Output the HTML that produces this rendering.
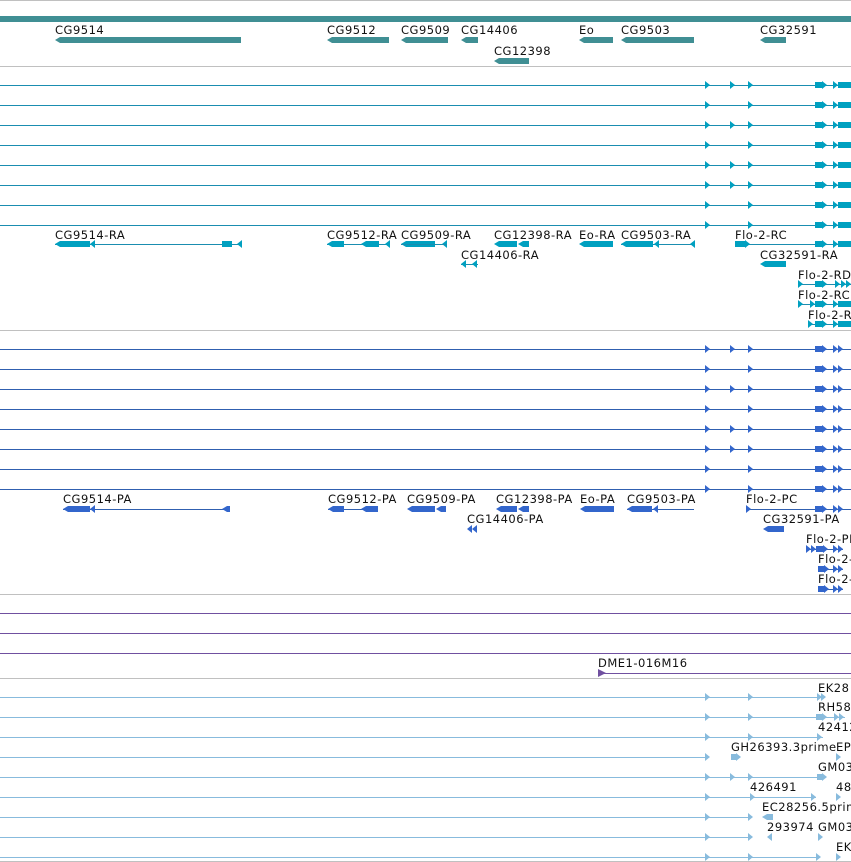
<!DOCTYPE html>
<html><head><style>
html,body{margin:0;padding:0;background:#fff;width:851px;height:862px;overflow:hidden}
text{font-family:"DejaVu Sans","Liberation Sans",sans-serif;font-size:11.5px;letter-spacing:0.5px;fill:#111}
</style></head><body>
<svg width="851" height="862" viewBox="0 0 851 862" xmlns="http://www.w3.org/2000/svg">
<defs>
<polygon id="ra" points="0,-4 5,0 0,4"/>
<polygon id="la" points="5,-4 0,0 5,4"/>
<g id="tx">
 <line x1="0" y1="0.5" x2="851" y2="0.5" stroke="#1a8db0" stroke-width="1"/>
 <use href="#ra" x="705"/><use href="#ra" x="748"/>
 <rect x="815" y="-3" width="8" height="6"/><use href="#ra" x="822"/>
 <use href="#ra" x="833"/><rect x="838" y="-3" width="13" height="6"/>
</g>
<g id="px">
 <line x1="0" y1="0.5" x2="851" y2="0.5" stroke="#3060b0" stroke-width="1"/>
 <use href="#ra" x="705"/><use href="#ra" x="748"/>
 <rect x="815" y="-3" width="8" height="6"/><use href="#ra" x="822"/>
 <use href="#ra" x="833"/><use href="#ra" x="838"/>
</g>
</defs>
<line x1="0" y1="0.5" x2="851" y2="0.5" stroke="#c0c0c0"/>
<rect x="0" y="16" width="851" height="6" fill="#408f94"/>
<g fill="#408f94">
<polygon points="55,40 60,37 241,37 241,43 60,43"/>
<polygon points="327,40 332,37 389,37 389,43 332,43"/>
<polygon points="401,40 406,37 448,37 448,43 406,43"/>
<polygon points="461,40 466,37 478,37 478,43 466,43"/>
<polygon points="579,40 584,37 613,37 613,43 584,43"/>
<polygon points="621,40 626,37 694,37 694,43 626,43"/>
<polygon points="760,40 765,37 786,37 786,43 765,43"/>
<polygon points="494,61 499,58 529,58 529,64 499,64"/>
</g>
<text x="55" y="34">CG9514</text><text x="327" y="34">CG9512</text><text x="401" y="34">CG9509</text>
<text x="461" y="34">CG14406</text><text x="579" y="34">Eo</text><text x="621" y="34">CG9503</text>
<text x="760" y="34">CG32591</text><text x="494" y="55">CG12398</text>
<line x1="0" y1="66.5" x2="851" y2="66.5" stroke="#c0c0c0"/>

<g fill="#00a0c0">
<use href="#tx" y="85"/><use href="#tx" y="105"/><use href="#tx" y="125"/><use href="#tx" y="145"/>
<use href="#tx" y="165"/><use href="#tx" y="185"/><use href="#tx" y="205"/><use href="#tx" y="225"/>
<use href="#ra" x="730" y="85"/><use href="#ra" x="730" y="125"/><use href="#ra" x="730" y="165"/><use href="#ra" x="730" y="185"/>
<line x1="55" y1="244.5" x2="242" y2="244.5" stroke="#1a8db0"/>
<polygon points="55,244 60,241 90,241 90,247 60,247"/><use href="#la" x="90" y="244"/>
<rect x="222" y="241" width="10" height="6"/><use href="#la" x="237" y="244"/>
<line x1="327" y1="244.5" x2="390" y2="244.5" stroke="#1a8db0"/>
<polygon points="327,244 332,241 344,241 344,247 332,247"/><polygon points="361,244 366,241 379,241 379,247 366,247"/><use href="#la" x="385" y="244"/>
<polygon points="401,244 406,241 435,241 435,247 406,247"/><use href="#la" x="442" y="244"/>
<line x1="401" y1="244.5" x2="447" y2="244.5" stroke="#1a8db0"/>
<polygon points="494,244 499,241 517,241 517,247 499,247"/><polygon points="518,244 523,241 529,241 529,247 523,247"/>
<polygon points="579,244 584,241 613,241 613,247 584,247"/>
<line x1="621" y1="244.5" x2="695" y2="244.5" stroke="#1a8db0"/>
<polygon points="621,244 626,241 653,241 653,247 626,247"/><use href="#la" x="654" y="244"/><use href="#la" x="690" y="244"/>
<line x1="735" y1="244.5" x2="851" y2="244.5" stroke="#1a8db0"/>
<rect x="735" y="241" width="10" height="6"/><use href="#ra" x="745" y="244"/>
<rect x="815" y="241" width="8" height="6"/><use href="#ra" x="822" y="244"/><use href="#ra" x="833" y="244"/><rect x="838" y="241" width="13" height="6"/>
<line x1="461" y1="264.5" x2="478" y2="264.5" stroke="#1a8db0"/><use href="#la" x="461" y="264"/><use href="#la" x="472" y="264"/>
<polygon points="760,264 765,261 786,261 786,267 765,267"/>
<line x1="798" y1="284.5" x2="851" y2="284.5" stroke="#1a8db0"/>
<use href="#ra" x="798" y="284"/><rect x="815" y="281" width="8" height="6"/><use href="#ra" x="822" y="284"/><use href="#ra" x="835" y="284"/><use href="#ra" x="841" y="284"/><use href="#ra" x="846" y="284"/>
<line x1="798" y1="304.5" x2="851" y2="304.5" stroke="#1a8db0"/>
<use href="#ra" x="798" y="304"/><use href="#ra" x="810" y="304"/><rect x="815" y="301" width="8" height="6"/><use href="#ra" x="822" y="304"/><use href="#ra" x="833" y="304"/><rect x="838" y="301" width="13" height="6"/>
<line x1="808" y1="324.5" x2="851" y2="324.5" stroke="#1a8db0"/>
<use href="#ra" x="808" y="324"/><rect x="815" y="321" width="8" height="6"/><use href="#ra" x="822" y="324"/><use href="#ra" x="833" y="324"/><rect x="838" y="321" width="13" height="6"/>
</g>
<text x="55" y="239">CG9514-RA</text><text x="327" y="239">CG9512-RA</text><text x="401" y="239">CG9509-RA</text>
<text x="494" y="239">CG12398-RA</text><text x="579" y="239">Eo-RA</text><text x="621" y="239">CG9503-RA</text>
<text x="735" y="239">Flo-2-RC</text><text x="461" y="259">CG14406-RA</text><text x="760" y="259">CG32591-RA</text>
<text x="798" y="279">Flo-2-RD</text><text x="798" y="299">Flo-2-RC</text><text x="808" y="319">Flo-2-RA</text>
<line x1="0" y1="330.5" x2="851" y2="330.5" stroke="#c0c0c0"/>

<g fill="#3366cc">
<use href="#px" y="349"/><use href="#px" y="369"/><use href="#px" y="389"/><use href="#px" y="409"/>
<use href="#px" y="429"/><use href="#px" y="449"/><use href="#px" y="469"/><use href="#px" y="489"/>
<use href="#ra" x="730" y="349"/><use href="#ra" x="730" y="389"/><use href="#ra" x="730" y="429"/><use href="#ra" x="730" y="449"/>
<line x1="63" y1="509.5" x2="230" y2="509.5" stroke="#3060b0"/>
<polygon points="63,509 68,506 90,506 90,512 68,512"/><use href="#la" x="90" y="509"/><polygon points="222,509 227,506 230,506 230,512 227,512"/>
<line x1="328" y1="509.5" x2="378" y2="509.5" stroke="#3060b0"/>
<polygon points="328,509 333,506 344,506 344,512 333,512"/><polygon points="361,509 366,506 378,506 378,512 366,512"/>
<polygon points="407,509 412,506 435,506 435,512 412,512"/><polygon points="436,509 441,506 446,506 446,512 441,512"/>
<polygon points="496,509 501,506 517,506 517,512 501,512"/><polygon points="518,509 523,506 529,506 529,512 523,512"/>
<polygon points="580,509 585,506 614,506 614,512 585,512"/>
<line x1="627" y1="509.5" x2="694" y2="509.5" stroke="#3060b0"/>
<polygon points="627,509 632,506 652,506 652,512 632,512"/><use href="#la" x="653" y="509"/>
<line x1="746" y1="509.5" x2="851" y2="509.5" stroke="#3060b0"/><use href="#ra" x="746" y="509"/>
<rect x="815" y="506" width="8" height="6"/><use href="#ra" x="822" y="509"/><use href="#ra" x="833" y="509"/><use href="#ra" x="838" y="509"/>
<use href="#la" x="467" y="529"/><use href="#la" x="472" y="529"/>
<polygon points="763,529 768,526 784,526 784,532 768,532"/>
<line x1="806" y1="549.5" x2="843" y2="549.5" stroke="#3060b0"/>
<use href="#ra" x="806" y="549"/><use href="#ra" x="811" y="549"/><rect x="816" y="546" width="8" height="6"/><use href="#ra" x="823" y="549"/><use href="#ra" x="833" y="549"/><use href="#ra" x="838" y="549"/>
<line x1="818" y1="569.5" x2="843" y2="569.5" stroke="#3060b0"/>
<rect x="818" y="566" width="7" height="6"/><use href="#ra" x="824" y="569"/><use href="#ra" x="833" y="569"/><use href="#ra" x="838" y="569"/>
<line x1="818" y1="589.5" x2="843" y2="589.5" stroke="#3060b0"/>
<rect x="818" y="586" width="7" height="6"/><use href="#ra" x="824" y="589"/><use href="#ra" x="833" y="589"/><use href="#ra" x="838" y="589"/>
</g>
<text x="63" y="503">CG9514-PA</text><text x="328" y="503">CG9512-PA</text><text x="407" y="503">CG9509-PA</text>
<text x="496" y="503">CG12398-PA</text><text x="580" y="503">Eo-PA</text><text x="627" y="503">CG9503-PA</text>
<text x="746" y="503">Flo-2-PC</text><text x="467" y="523">CG14406-PA</text><text x="763" y="523">CG32591-PA</text>
<text x="806" y="543">Flo-2-PD</text><text x="818" y="563">Flo-2-PA</text><text x="818" y="583">Flo-2-PB</text>
<line x1="0" y1="594.5" x2="851" y2="594.5" stroke="#c0c0c0"/>

<g stroke="#7050a0">
<line x1="0" y1="613.5" x2="851" y2="613.5"/><line x1="0" y1="633.5" x2="851" y2="633.5"/><line x1="0" y1="653.5" x2="851" y2="653.5"/>
<line x1="598" y1="673.5" x2="851" y2="673.5"/>
</g>
<polygon points="598,669 606,673 598,677" fill="#7050a0"/>
<text x="598" y="667">DME1-016M16</text>
<line x1="0" y1="678.5" x2="851" y2="678.5" stroke="#c0c0c0"/>

<g fill="#88bbdd" stroke="none">
<g stroke="#88bbdd">
<line x1="0" y1="697.5" x2="823" y2="697.5"/><line x1="0" y1="717.5" x2="845" y2="717.5"/>
<line x1="0" y1="737.5" x2="823" y2="737.5"/><line x1="0" y1="757.5" x2="707" y2="757.5"/>
<line x1="0" y1="777.5" x2="823" y2="777.5"/><line x1="0" y1="797.5" x2="816" y2="797.5"/>
<line x1="0" y1="817.5" x2="750" y2="817.5"/><line x1="0" y1="837.5" x2="750" y2="837.5"/>
<line x1="0" y1="857.5" x2="820" y2="857.5"/>
</g>
<use href="#ra" x="705" y="697"/><use href="#ra" x="748" y="697"/><use href="#ra" x="817" y="697"/><use href="#ra" x="821" y="697"/>
<use href="#ra" x="705" y="717"/><use href="#ra" x="748" y="717"/><rect x="816" y="714" width="7" height="6"/><use href="#ra" x="822" y="717"/><use href="#ra" x="834" y="717"/><use href="#ra" x="839" y="717"/>
<use href="#ra" x="705" y="737"/><use href="#ra" x="748" y="737"/><use href="#ra" x="817" y="737"/>
<use href="#ra" x="705" y="757"/><rect x="731" y="754" width="5" height="6"/><use href="#ra" x="736" y="757"/><use href="#ra" x="836" y="757"/>
<use href="#ra" x="705" y="777"/><use href="#ra" x="730" y="777"/><use href="#ra" x="748" y="777"/><rect x="817" y="774" width="5" height="6"/><use href="#ra" x="822" y="777"/>
<use href="#ra" x="705" y="797"/><use href="#ra" x="750" y="797"/><use href="#ra" x="811" y="797"/><use href="#ra" x="836" y="797"/>
<use href="#ra" x="705" y="817"/><use href="#ra" x="748" y="817"/><polygon points="762,817 767,814 773,814 773,820 767,820"/>
<use href="#ra" x="705" y="837"/><use href="#ra" x="748" y="837"/><use href="#la" x="767" y="837"/><use href="#ra" x="818" y="837"/>
<use href="#ra" x="705" y="857"/><use href="#ra" x="748" y="857"/><use href="#ra" x="816" y="857"/><use href="#ra" x="836" y="857"/>
</g>
<text x="818" y="692">EK28</text><text x="818" y="711">RH58</text><text x="818" y="731">42412</text>
<text x="731" y="751">GH26393.3prime</text><text x="836" y="751">EP</text><text x="818" y="771">GM03</text>
<text x="750" y="791">426491</text><text x="836" y="791">48</text><text x="762" y="811">EC28256.5prime</text>
<text x="767" y="831">293974</text><text x="818" y="831">GM03</text><text x="836" y="851">EK</text>
<line x1="0" y1="861.5" x2="851" y2="861.5" stroke="#c0c0c0"/>
</svg>
</body></html>
